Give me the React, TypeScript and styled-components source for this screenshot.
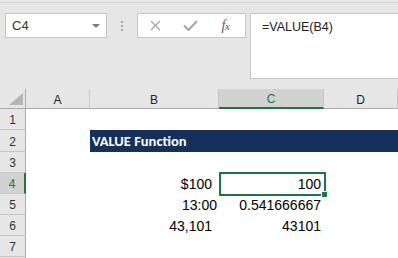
import styled, { createGlobalStyle } from "styled-components";

const GlobalStyle = createGlobalStyle`
  html, body {
    margin: 0;
    padding: 0;
    background: #ffffff;
  }
  body {
    font-family: "Liberation Sans", Arial, sans-serif;
  }
`

const GREEN = "#217346"

const Window = styled.div`
  width: 398px;
  height: 258px;
  overflow: hidden;
  background: #ffffff;
  display: flex;
  flex-direction: column;
`

// formula bar area above the grid
const Ribbon = styled.div`
  flex: none;
  height: 89px;
  padding-top: 2px;
  box-sizing: border-box;
  background: #e6e6e6;
`

const TopRule = styled.div`
  height: 1px;
  background: #d2d2d2;
`

const FormulaRow = styled.div`
  display: flex;
  align-items: flex-start;
  margin-top: 10px;
  padding-left: 5px;
`

const NameBox = styled.div`
  width: 102px;
  height: 25px;
  box-sizing: border-box;
  border: 1px solid #c6c6c6;
  background: #ffffff;
  display: flex;
  align-items: center;
  justify-content: space-between;
  padding: 0 6px;
  font-size: 13px;
  color: #333333;
`

const DropArrow = styled.div`
  width: 0;
  height: 0;
  border-left: 4px solid transparent;
  border-right: 4px solid transparent;
  border-top: 4px solid #7a7a7a;
`

const Grip = styled.div`
  width: 30px;
  height: 25px;
  display: flex;
  flex-direction: column;
  align-items: center;
  justify-content: center;
  gap: 2px;
`

const GripDot = styled.div`
  width: 2px;
  height: 2px;
  background: #a6a6a6;
`

const FuncBox = styled.div`
  width: 109px;
  height: 25px;
  box-sizing: border-box;
  border: 1px solid #c6c6c6;
  background: #ffffff;
  display: flex;
  align-items: center;
`

const FuncButton = styled.div`
  width: 35px;
  height: 23px;
  display: flex;
  align-items: center;
  justify-content: center;
`

const Fx = styled.span`
  font-family: "Liberation Serif", "Times New Roman", serif;
  font-style: italic;
  font-size: 14px;
  color: #5a5a5a;
  letter-spacing: -0.5px;

  small {
    font-size: 11px;
  }
`

const FormulaInput = styled.div`
  flex: 1;
  height: 66px;
  margin-left: 4px;
  margin-right: -6px;
  box-sizing: border-box;
  border: 1px solid #c6c6c6;
  background: #ffffff;
  padding: 6px 0 0 11px;
  font-size: 12.5px;
  line-height: 15px;
  color: #222222;
`

const Sheet = styled.div`
  flex: 1;
  display: flex;
  flex-direction: column;
`

const GridRow = styled.div<{ $h: number }>`
  display: grid;
  grid-template-columns: 26px 64px 129px 105px 1fr;
  height: ${(p) => p.$h}px;
  flex: none;
`

const Corner = styled.div`
  background: #e6e6e6;
  border-right: 1px solid #ababab;
  border-bottom: 1px solid #ababab;
  display: flex;
  align-items: flex-end;
  justify-content: flex-end;
  padding: 0 2px 3px 0;
`

const ColHeader = styled.div<{ $active?: boolean }>`
  background: ${(p) => (p.$active ? "#d2d2d2" : "#e6e6e6")};
  border-right: 1px solid #c6c6c6;
  border-bottom: ${(p) => (p.$active ? `2px solid ${GREEN}` : "1px solid #ababab")};
  display: flex;
  align-items: center;
  justify-content: center;
  padding-top: 2px;
  font-size: 12px;
  color: ${(p) => (p.$active ? GREEN : "#222222")};
`

const RowHeader = styled.div<{ $active?: boolean }>`
  background: ${(p) => (p.$active ? "#d2d2d2" : "#e6e6e6")};
  border-right: ${(p) => (p.$active ? `2px solid ${GREEN}` : "1px solid #ababab")};
  border-bottom: 1px solid #c6c6c6;
  display: flex;
  align-items: center;
  justify-content: center;
  padding-top: 2px;
  font-size: 12px;
  color: ${(p) => (p.$active ? GREEN : "#333333")};
`

const Cell = styled.div<{ $pad?: number }>`
  position: relative;
  display: flex;
  align-items: center;
  justify-content: flex-end;
  padding: 1px ${(p) => p.$pad ?? 3}px 0 0;
  font-size: 14px;
  color: #000000;
  white-space: nowrap;
`

const TitleBar = styled.div`
  grid-column: 3 / -1;
  background: #15305a;
  color: #ffffff;
  font-family: Carlito, "Liberation Sans Narrow", "Liberation Sans", Arial, sans-serif;
  font-weight: 700;
  font-size: 14.5px;
  display: flex;
  align-items: center;
  padding-left: 2px;
`

// selection frame around the active cell
const Selection = styled.div`
  position: absolute;
  top: -1px;
  left: 0;
  right: -2px;
  bottom: -2px;
  border: 2px solid ${GREEN};
`

const FillHandle = styled.div`
  position: absolute;
  right: -4px;
  bottom: -4px;
  width: 5px;
  height: 5px;
  background: ${GREEN};
  border: 1px solid #ffffff;
`

const rows = [
  { n: 1, h: 21 },
  { n: 2, h: 22, title: "VALUE Function" },
  { n: 3, h: 21 },
  { n: 4, h: 21, b: "$100", c: "100", active: true },
  { n: 5, h: 21, b: "13:00", c: "0.541666667", bPad: 2 },
  { n: 6, h: 21, b: "43,101", c: "43101" },
  { n: 7, h: 21 },
]

const App = () => {
  return (
    <Window>
      <GlobalStyle />
      <Ribbon>
        <TopRule />
        <FormulaRow>
          <NameBox>
            <span>C4</span>
            <DropArrow />
          </NameBox>
          <Grip>
            <GripDot />
            <GripDot />
            <GripDot />
          </Grip>
          <FuncBox>
            <FuncButton>
              <svg width="11" height="11" viewBox="0 0 11 11">
                <path d="M1 1 L10 10 M10 1 L1 10" stroke="#a6a6a6" strokeWidth="1.3" fill="none" />
              </svg>
            </FuncButton>
            <FuncButton>
              <svg width="15" height="11" viewBox="0 0 15 11">
                <path d="M1 5.5 L5.5 10 L14 1" stroke="#a6a6a6" strokeWidth="2" fill="none" />
              </svg>
            </FuncButton>
            <FuncButton>
              <Fx>
                f<small>x</small>
              </Fx>
            </FuncButton>
          </FuncBox>
          <FormulaInput>=VALUE(B4)</FormulaInput>
        </FormulaRow>
      </Ribbon>
      <Sheet>
        <GridRow $h={20}>
          <Corner>
            <svg width="14" height="12" viewBox="0 0 14 12">
              <polygon points="14,0 14,12 0,12" fill="#b5b5b5" />
            </svg>
          </Corner>
          <ColHeader>A</ColHeader>
          <ColHeader>B</ColHeader>
          <ColHeader $active>C</ColHeader>
          <ColHeader>D</ColHeader>
        </GridRow>
        {rows.map((row) => (
          <GridRow key={row.n} $h={row.h}>
            <RowHeader $active={row.active}>{row.n}</RowHeader>
            <Cell />
            {row.title ? (
              <TitleBar>{row.title}</TitleBar>
            ) : (
              <>
                <Cell $pad={row.bPad ?? 7}>{row.b}</Cell>
                <Cell $pad={3}>
                  {row.c}
                  {row.active && (
                    <Selection>
                      <FillHandle />
                    </Selection>
                  )}
                </Cell>
                <Cell />
              </>
            )}
          </GridRow>
        ))}
        <GridRow $h={4}>
          <RowHeader />
        </GridRow>
      </Sheet>
    </Window>
  )
}

export default App;
